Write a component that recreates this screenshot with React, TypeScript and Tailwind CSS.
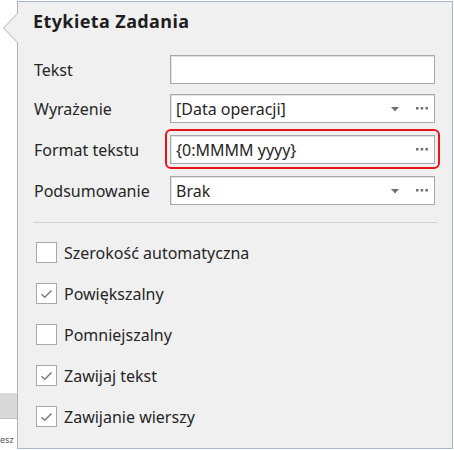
import React from "react";

const font = { fontFamily: '"Noto Sans", "Liberation Sans", sans-serif' };

function Field({
  value,
  arrow,
  highlight,
}: {
  value?: string;
  arrow?: boolean;
  highlight?: boolean;
}) {
  return (
    <div className="relative w-[265px] h-[29px]">
      {highlight && (
        <div className="absolute -left-[5px] -top-[6px] w-[275px] h-[40px] border-2 border-[#e8141b] rounded-[6px]" />
      )}
      <div className="relative flex items-center h-full bg-white border border-[#a8a8a8] shadow-[inset_1px_1px_0_#e2e2e2] pl-[5px] pr-[6px]">
        <span className="flex-1 text-[16px] text-[#262626] leading-none">{value}</span>
        {arrow && (
          <svg width="8" height="5" viewBox="0 0 8 5" className="mr-[17px] mt-[2px]">
            <path d="M0 0h8L4 4.5z" fill="#707070" />
          </svg>
        )}
        {(arrow || highlight) && (
          <svg width="12" height="3" viewBox="0 0 12 3">
            <rect x="0" y="0" width="2.5" height="2.5" fill="#707070" />
            <rect x="4.7" y="0" width="2.5" height="2.5" fill="#707070" />
            <rect x="9.4" y="0" width="2.5" height="2.5" fill="#707070" />
          </svg>
        )}
      </div>
    </div>
  );
}

function Check({ label, checked }: { label: string; checked?: boolean }) {
  return (
    <div className="flex items-center h-[21px]">
      <div className="w-[21px] h-[21px] bg-white border border-[#a9a9a9] flex items-center justify-center">
        {checked && (
          <svg width="13" height="10" viewBox="0 0 13 10">
            <path d="M1.5 5.2 4.8 8.3 11.5 1.5" fill="none" stroke="#7c7c7c" strokeWidth="1.5" />
          </svg>
        )}
      </div>
      <span className="ml-[7px] text-[16px] text-[#262626]">{label}</span>
    </div>
  );
}

export default function App() {
  const rows: { label: string; value?: string; arrow?: boolean; highlight?: boolean; mt: string }[] = [
    { label: "Tekst", mt: "mt-[0px]" },
    { label: "Wyrażenie", value: "[Data operacji]", arrow: true, mt: "mt-[10px]" },
    { label: "Format tekstu", value: "{0:MMMM yyyy}", highlight: true, mt: "mt-[12px]" },
    { label: "Podsumowanie", value: "Brak", arrow: true, mt: "mt-[12px]" },
  ];

  return (
    <div className="w-[454px] h-[450px] bg-white flex overflow-hidden" style={font}>
      <div className="w-[17px] shrink-0 flex flex-col">
        <div className="h-[393px]" />
        <div className="h-[26px] bg-[#d9d9d9] border-b border-[#c4c4c4]" />
        <div className="h-[16px]" />
        <div className="text-[9px] leading-none text-[#555]">esz</div>
      </div>
      <div className="relative mt-[1px] w-[436px] h-[448px] bg-[#f0f0f0] border border-[#a7b6cb]">
        <svg
          width="17"
          height="32"
          viewBox="0 0 17 32"
          className="absolute -left-[16px] top-[10px]"
        >
          <path d="M16.5 0.5 1.5 16 16.5 31.5" fill="#f0f0f0" stroke="#a7b6cb" />
          <rect x="16" y="0" width="1" height="32" fill="#f0f0f0" />
        </svg>
        <div className="pl-[15px] pt-[6px] text-[18px] font-bold text-[#1e1e1e] tracking-[0.4px]">Etykieta Zadania</div>
        <div className="pl-[16px] pr-[15px] mt-[20px]">
          {rows.map((r) => (
            <div key={r.label} className={`flex items-center ${r.mt}`}>
              <span className="w-[136px] text-[16px] text-[#262626]">{r.label}</span>
              <Field value={r.value} arrow={r.arrow} highlight={r.highlight} />
            </div>
          ))}
          <div className="mt-[17px] h-px bg-[#d2d2d2]" />
          <div className="mt-[19px] pl-[2px] flex flex-col gap-[20px]">
            <Check label="Szerokość automatyczna" />
            <Check label="Powiększalny" checked />
            <Check label="Pomniejszalny" />
            <Check label="Zawijaj tekst" checked />
            <Check label="Zawijanie wierszy" checked />
          </div>
        </div>
      </div>
    </div>
  );
}
